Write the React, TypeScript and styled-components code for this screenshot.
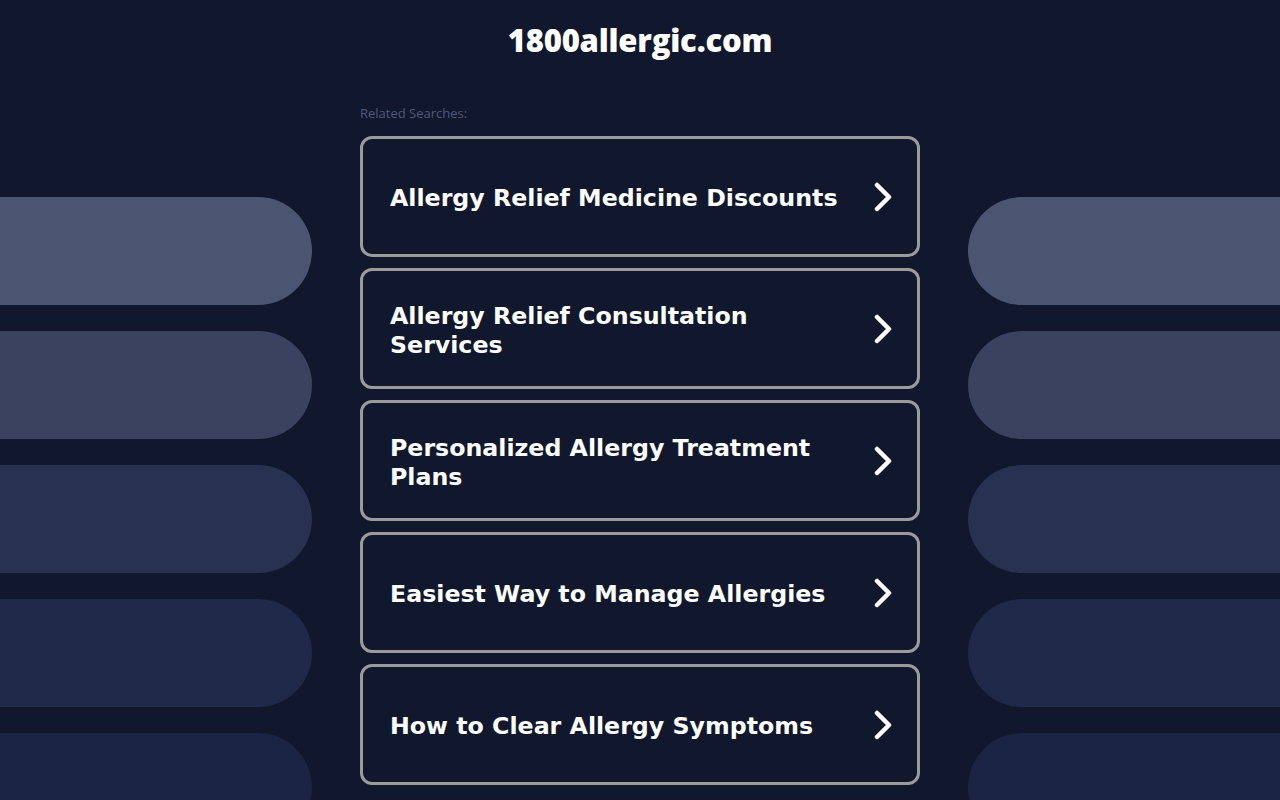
import React from 'react'
import styled, { createGlobalStyle } from 'styled-components';

const GlobalStyle = createGlobalStyle`
  html, body {
    margin: 0;
    padding: 0;
    background: #11172c;
  }
  body {
    font-family: "DejaVu Sans", Verdana, sans-serif;
  }
`;

const Page = styled.div`
  width: 1280px;
  height: 800px;
  overflow: hidden;
  background: #11172c;
`;

const Header = styled.header`
  height: 80px;
  display: flex;
  align-items: center;
  justify-content: center;
`;

const Title = styled.h1`
  margin: 0;
  font-family: "Open Sans", "Liberation Sans", sans-serif;
  font-weight: 800;
  font-size: 31px;
  letter-spacing: -0.2px;
  color: #ffffff;
`;

const Layout = styled.div`
  display: grid;
  grid-template-columns: 312px 560px 312px;
  column-gap: 48px;
`;

const Side = styled.div`
  display: flex;
  flex-direction: column;
  gap: 26px;
  padding-top: 117px;
`;

type PillProps = { $side: 'left' | 'right'; $tone: string };

const Pill = styled.div<PillProps>`
  height: 108px;
  background: ${p => p.$tone};
  border-radius: ${p => (p.$side === 'left' ? '0 54px 54px 0' : '54px 0 0 54px')};
`;

const Center = styled.main`
  display: flex;
  flex-direction: column;
`;

const Label = styled.div`
  font-family: "Open Sans", "Liberation Sans", sans-serif;
  font-size: 13px;
  line-height: 16px;
  color: #4f5a7c;
  padding-top: 25px;
  height: 56px;
  box-sizing: border-box;
`;

const List = styled.div`
  display: flex;
  flex-direction: column;
  gap: 11px;
`;

const Card = styled.a`
  box-sizing: border-box;
  height: 121px;
  border: 3px solid #9b9b9b;
  border-radius: 12px;
  display: flex;
  align-items: center;
  justify-content: space-between;
  padding: 4px 23px 0 27px;
  color: #ffffff;
  text-decoration: none;
  cursor: pointer;
`;

const CardText = styled.span`
  font-family: "DejaVu Sans", Verdana, sans-serif;
  font-weight: 700;
  font-size: 23.7px;
  line-height: 29px;
  max-width: 470px;
`;

const ChevronIcon = styled.svg`
  margin-top: -4px;
  flex-shrink: 0;
`;

const Chevron = () => (
  <ChevronIcon width="22" height="30" viewBox="0 0 22 30" fill="none">
    <polyline
      points="5,3 17,15 5,27"
      stroke="#ffffff"
      strokeWidth="4.5"
      strokeLinecap="round"
      strokeLinejoin="round"
    />
  </ChevronIcon>
);

const tones = ['#4b5571', '#3a4260', '#283150', '#202949', '#1c2444'];

const searches = [
  'Allergy Relief Medicine Discounts',
  'Allergy Relief Consultation Services',
  'Personalized Allergy Treatment Plans',
  'Easiest Way to Manage Allergies',
  'How to Clear Allergy Symptoms',
];

export default function App() {
  return (
    <>
      <GlobalStyle />
      <Page>
        <Header>
          <Title>1800allergic.com</Title>
        </Header>
        <Layout>
          <Side>
            {tones.map(t => (
              <Pill key={t} $side="left" $tone={t} />
            ))}
          </Side>
          <Center>
            <Label>Related Searches:</Label>
            <List>
              {searches.map(s => (
                <Card key={s}>
                  <CardText>{s}</CardText>
                  <Chevron />
                </Card>
              ))}
            </List>
          </Center>
          <Side>
            {tones.map(t => (
              <Pill key={t} $side="right" $tone={t} />
            ))}
          </Side>
        </Layout>
      </Page>
    </>
  );
}
